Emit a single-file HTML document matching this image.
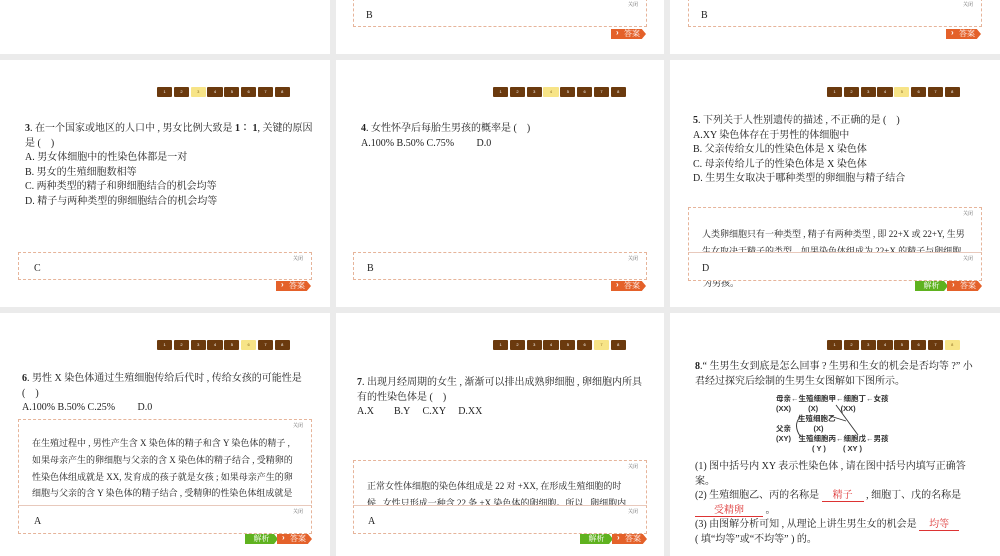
<!DOCTYPE html>
<html><head><meta charset="utf-8"><style>
*{margin:0;padding:0;box-sizing:border-box}
body{width:1000px;height:556px;background:#ebebeb;position:relative;overflow:hidden;font-family:"Liberation Serif","Noto Serif CJK SC",serif;color:#222}
.p{position:absolute;background:#fff;overflow:hidden}
.a{position:absolute}
.t{position:absolute;font-size:10px;line-height:14.6px;white-space:nowrap}
.nav{position:absolute;display:flex;gap:1.5px}
.nav span{width:15.3px;height:10px;background:#6b3a0e;color:#fff;font-size:4px;line-height:10px;text-align:center;border-radius:1px;font-family:"Liberation Sans",sans-serif}
.nav span.on{background:#f7e487;color:#8a6a20}
.box{position:absolute;border:1px dashed #e6b49a;background:#fff;overflow:hidden}
.box .c{position:absolute;right:8px;top:2px;font-size:5px;color:#666}
.ans{position:absolute;height:10px;width:35px;background:#e4612a;color:#fff;font-size:8px;line-height:10px;text-align:right;padding-right:6px;clip-path:polygon(0 0,88% 0,100% 50%,88% 100%,0 100%)}
.ans:before{content:"›";position:absolute;left:5px;top:-1px;font-weight:bold;font-family:"Liberation Sans",sans-serif}
.jx{position:absolute;height:10px;width:33px;background:#5fb21f;color:#fff;font-size:8px;line-height:10px;text-align:center;clip-path:polygon(0 0,88% 0,100% 50%,88% 100%,0 100%)}
.ex{font-size:9px;line-height:16.5px;position:absolute;left:13px;white-space:nowrap}
.red{color:#d33;border-bottom:1px solid #d33;display:inline-block;text-align:center;line-height:11px}
.dg{position:absolute;font-size:7.5px;line-height:9.5px;font-family:"Liberation Sans","Noto Sans CJK SC",sans-serif;white-space:nowrap;font-weight:bold;color:#333}
</style></head><body>

<div class="p" style="left:0;top:0;width:330px;height:54px"></div>
<div class="p" style="left:336px;top:0;width:328px;height:54px">
 <div class="box" style="left:17px;top:-2px;width:294px;height:29px"><span class="c">关闭</span><div class="t" style="left:12px;top:10px">B</div></div>
 <div class="ans" style="left:275px;top:29px">答案</div>
</div>
<div class="p" style="left:670px;top:0;width:330px;height:54px">
 <div class="box" style="left:18px;top:-2px;width:294px;height:29px"><span class="c">关闭</span><div class="t" style="left:12px;top:10px">B</div></div>
 <div class="ans" style="left:276px;top:29px">答案</div>
</div>

<div class="p" style="left:0;top:60px;width:330px;height:247px">
 <div class="nav" style="left:157px;top:27px"><span>1</span><span>2</span><span class="on">3</span><span>4</span><span>5</span><span>6</span><span>7</span><span>8</span></div>
 <div class="t" style="left:25px;top:62px"><b>3</b>. 在一个国家或地区的人口中 , 男女比例大致是 <b>1∶ 1</b>, 关键的原因<br>是 (　)<br>A. 男女体细胞中的性染色体都是一对<br>B. 男女的生殖细胞数相等<br>C. 两种类型的精子和卵细胞结合的机会均等<br>D. 精子与两种类型的卵细胞结合的机会均等</div>
 <div class="box" style="left:18px;top:192px;width:294px;height:28px"><span class="c">关闭</span><div class="t" style="left:15px;top:9px">C</div></div>
 <div class="ans" style="left:276px;top:221px">答案</div>
</div>
<div class="p" style="left:336px;top:60px;width:328px;height:247px">
 <div class="nav" style="left:157px;top:27px"><span>1</span><span>2</span><span>3</span><span class="on">4</span><span>5</span><span>6</span><span>7</span><span>8</span></div>
 <div class="t" style="left:25px;top:62px"><b>4</b>. 女性怀孕后每胎生男孩的概率是 (　)<br>A.100% B.50% C.75%　　 D.0</div>
 <div class="box" style="left:17px;top:192px;width:294px;height:28px"><span class="c">关闭</span><div class="t" style="left:13px;top:9px">B</div></div>
 <div class="ans" style="left:275px;top:221px">答案</div>
</div>
<div class="p" style="left:670px;top:60px;width:330px;height:247px">
 <div class="nav" style="left:157px;top:27px"><span>1</span><span>2</span><span>3</span><span>4</span><span class="on">5</span><span>6</span><span>7</span><span>8</span></div>
 <div class="t" style="left:23px;top:54px"><b>5</b>. 下列关于人性别遗传的描述 , 不正确的是 (　)<br>A.XY 染色体存在于男性的体细胞中<br>B. 父亲传给女儿的性染色体是 X 染色体<br>C. 母亲传给儿子的性染色体是 X 染色体<br>D. 生男生女取决于哪种类型的卵细胞与精子结合</div>
 <div class="box" style="left:18px;top:147px;width:294px;height:74px"><span class="c">关闭</span><div class="ex" style="top:18px">人类卵细胞只有一种类型 , 精子有两种类型 , 即 22+X 或 22+Y, 生男<br>生女取决于精子的类型。如果染色体组成为 22+X 的精子与卵细胞</div></div>
 <div class="t" style="left:33px;top:216px;font-size:9px">为男孩。</div>
 <div class="box" style="left:18px;top:192px;width:294px;height:29px;border-top-style:solid;border-top-color:#e8c9bc"><span class="c">关闭</span><div class="t" style="left:13px;top:9px">D</div></div>
 <div class="jx" style="left:245px;top:221px">解析</div>
 <div class="ans" style="left:277px;top:221px">答案</div>
</div>

<div class="p" style="left:0;top:313px;width:330px;height:243px">
 <div class="nav" style="left:157px;top:27px"><span>1</span><span>2</span><span>3</span><span>4</span><span>5</span><span class="on">6</span><span>7</span><span>8</span></div>
 <div class="t" style="left:22px;top:59px"><b>6</b>. 男性 X 染色体通过生殖细胞传给后代时 , 传给女孩的可能性是<br>(　)<br>A.100% B.50% C.25%　　 D.0</div>
 <div class="box" style="left:18px;top:106px;width:294px;height:115px"><span class="c">关闭</span><div class="ex" style="top:15px;line-height:16.8px">在生殖过程中 , 男性产生含 X 染色体的精子和含 Y 染色体的精子 ,<br>如果母亲产生的卵细胞与父亲的含 X 染色体的精子结合 , 受精卵的<br>性染色体组成就是 XX, 发育成的孩子就是女孩 ; 如果母亲产生的卵<br>细胞与父亲的含 Y 染色体的精子结合 , 受精卵的性染色体组成就是</div></div>
 <div class="box" style="left:18px;top:192px;width:294px;height:29px;border-top-style:solid;border-top-color:#e8c9bc"><span class="c">关闭</span><div class="t" style="left:15px;top:9px">A</div></div>
 <div class="jx" style="left:245px;top:221px">解析</div>
 <div class="ans" style="left:277px;top:221px">答案</div>
</div>
<div class="p" style="left:336px;top:313px;width:328px;height:243px">
 <div class="nav" style="left:157px;top:27px"><span>1</span><span>2</span><span>3</span><span>4</span><span>5</span><span>6</span><span class="on">7</span><span>8</span></div>
 <div class="t" style="left:21px;top:63px"><b>7</b>. 出现月经周期的女生 , 渐渐可以排出成熟卵细胞 , 卵细胞内所具<br>有的性染色体是 (　)<br>A.X　　B.Y　 C.XY　 D.XX</div>
 <div class="box" style="left:17px;top:147px;width:294px;height:74px"><span class="c">关闭</span><div class="ex" style="top:17px">正常女性体细胞的染色体组成是 22 对 +XX, 在形成生殖细胞的时<br>候 , 女性只形成一种含 22 条 +X 染色体的卵细胞。所以 , 卵细胞内</div></div>
 <div class="box" style="left:17px;top:192px;width:294px;height:29px;border-top-style:solid;border-top-color:#e8c9bc"><span class="c">关闭</span><div class="t" style="left:14px;top:9px">A</div></div>
 <div class="jx" style="left:244px;top:221px">解析</div>
 <div class="ans" style="left:276px;top:221px">答案</div>
</div>
<div class="p" style="left:670px;top:313px;width:330px;height:243px">
 <div class="nav" style="left:157px;top:27px"><span>1</span><span>2</span><span>3</span><span>4</span><span>5</span><span>6</span><span>7</span><span class="on">8</span></div>
 <div class="t" style="left:25px;top:47px"><b>8</b>.“ 生男生女到底是怎么回事 ? 生男和生女的机会是否均等 ?” 小<br>君经过探究后绘制的生男生女图解如下图所示。</div>
 <div class="dg" style="left:106px;top:81px">母亲←生殖细胞甲←细胞丁←女孩</div>
 <div class="dg" style="left:106px;top:91px">(XX)　　 (X)　　　(XX)</div>
 <div class="dg" style="left:128px;top:101px">生殖细胞乙</div>
 <div class="dg" style="left:106px;top:111px">父亲　　　(X)</div>
 <div class="dg" style="left:106px;top:121px">(XY)　生殖细胞丙←细胞戊←男孩</div>
 <div class="dg" style="left:142px;top:131px">( Y )　　 ( XY )</div>
 <svg class="a" style="left:100px;top:80px" width="110" height="60"><path d="M66 12L88 42M76 28L60 23" stroke="#333" stroke-width="0.9" fill="none"/><path d="M30 24Q23 32 30 43" stroke="#333" stroke-width="0.9" fill="none"/></svg>
 <div class="t" style="left:25px;top:147px">(1) 图中括号内 XY 表示性染色体 , 请在图中括号内填写正确答<br>案。<br>(2) 生殖细胞乙、丙的名称是 <span class="red" style="width:42px">精子</span> , 细胞丁、戊的名称是<br><span class="red" style="width:68px">受精卵</span> 。<br>(3) 由图解分析可知 , 从理论上讲生男生女的机会是 <span class="red" style="width:40px">均等</span><br>( 填“均等”或“不均等” ) 的。</div>
</div>
</body></html>
